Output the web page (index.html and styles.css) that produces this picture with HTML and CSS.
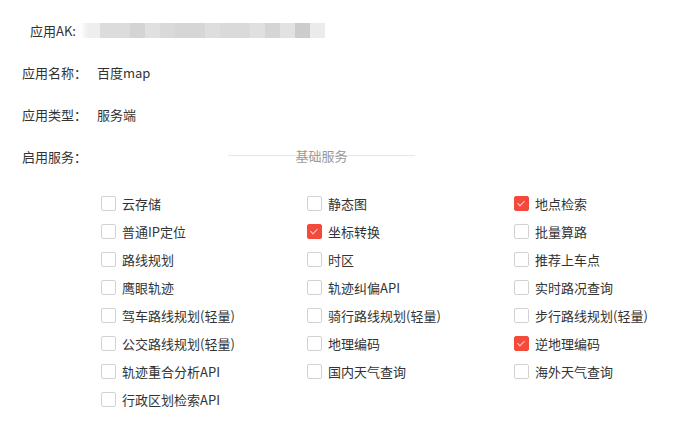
FILE: index.html
```html
<!DOCTYPE html>
<html lang="zh-CN">
<head>
    <meta charset="UTF-8">
    <title>应用详情</title>
    <link rel="stylesheet" href="styles.css">
</head>
<body>
    <div class="app-info">
        <div class="row row-ak">
            <span class="label">应用AK:</span>
            <span class="masked">
                <i style="width:20px;background:linear-gradient(90deg,#fff,#eeeeee 40%)"></i>
                <i style="width:30px;background:#dcdcdc"></i>
                <i style="width:15px;background:#d4d4d4"></i>
                <i style="width:15px;background:#e0e0e0"></i>
                <i style="width:15px;background:#d9d9d9"></i>
                <i style="width:30px;background:#d6d6d6"></i>
                <i style="width:15px;background:#dedede"></i>
                <i style="width:30px;background:#dadada"></i>
                <i style="width:15px;background:#e0e0e0"></i>
                <i style="width:15px;background:#d5d5d5"></i>
                <i style="width:15px;background:#e2e2e2"></i>
                <i style="width:15px;background:#cccccc"></i>
                <i style="width:15px;background:#ebebeb"></i>
            </span>
        </div>
        <div class="row">
            <span class="label">应用名称：</span>
            <span class="value">百度map</span>
        </div>
        <div class="row">
            <span class="label">应用类型：</span>
            <span class="value">服务端</span>
        </div>
        <div class="row">
            <span class="label">启用服务：</span>
            <div class="divider"><span>基础服务</span></div>
        </div>

        <div class="services">
            <label class="check"><span class="box"></span>云存储</label>
            <label class="check"><span class="box"></span>静态图</label>
            <label class="check"><span class="box checked"></span>地点检索</label>
            <label class="check"><span class="box"></span>普通IP定位</label>
            <label class="check"><span class="box checked"></span>坐标转换</label>
            <label class="check"><span class="box"></span>批量算路</label>
            <label class="check"><span class="box"></span>路线规划</label>
            <label class="check"><span class="box"></span>时区</label>
            <label class="check"><span class="box"></span>推荐上车点</label>
            <label class="check"><span class="box"></span>鹰眼轨迹</label>
            <label class="check"><span class="box"></span>轨迹纠偏API</label>
            <label class="check"><span class="box"></span>实时路况查询</label>
            <label class="check"><span class="box"></span>驾车路线规划(轻量)</label>
            <label class="check"><span class="box"></span>骑行路线规划(轻量)</label>
            <label class="check"><span class="box"></span>步行路线规划(轻量)</label>
            <label class="check"><span class="box"></span>公交路线规划(轻量)</label>
            <label class="check"><span class="box"></span>地理编码</label>
            <label class="check"><span class="box checked"></span>逆地理编码</label>
            <label class="check"><span class="box"></span>轨迹重合分析API</label>
            <label class="check"><span class="box"></span>国内天气查询</label>
            <label class="check"><span class="box"></span>海外天气查询</label>
            <label class="check"><span class="box"></span>行政区划检索API</label>
        </div>
    </div>
</body>
</html>
```

FILE: styles.css
```css
body {
    margin: 0;
    background-color: #fff;
    font-family: "Noto Sans CJK SC", "Microsoft YaHei", sans-serif;
    font-size: 13px;
    color: #333;
}

.app-info {
    padding: 9px 0 0 22px;
}

.row {
    display: flex;
    align-items: center;
    height: 42px;
}

.label {
    width: 75px;
    flex-shrink: 0;
}

.row-ak .label {
    width: auto;
    padding-left: 8px;
    margin-right: 4px;
}

.masked {
    display: flex;
    height: 15px;
}

.masked i {
    display: block;
    height: 100%;
}

.divider {
    position: relative;
    width: 187px;
    margin-left: 131px;
    text-align: center;
    color: #999;
    line-height: 20px;
}

.divider::before {
    content: "";
    position: absolute;
    left: 0;
    right: 0;
    top: 9px;
    border-top: 1px solid #e6e6e6;
}

.divider span {
    position: relative;
}

/* 服务勾选列表 */
.services {
    display: grid;
    grid-template-columns: 206px 207px 160px;
    grid-auto-rows: 28px;
    margin: 12px 0 0 79px;
}

.check {
    display: flex;
    align-items: center;
    white-space: nowrap;
}

.box {
    position: relative;
    width: 13px;
    height: 13px;
    border: 1px solid #d2d2d2;
    border-radius: 2px;
    margin-right: 6px;
    flex-shrink: 0;
}

.box.checked {
    background-color: #f5493c;
    border-color: #f5493c;
}

.box.checked::after {
    content: "";
    position: absolute;
    left: 4px;
    top: 2px;
    width: 3px;
    height: 6px;
    border: solid #fbd0cc;
    border-width: 0 1.5px 1.5px 0;
    transform: rotate(45deg);
}
```
